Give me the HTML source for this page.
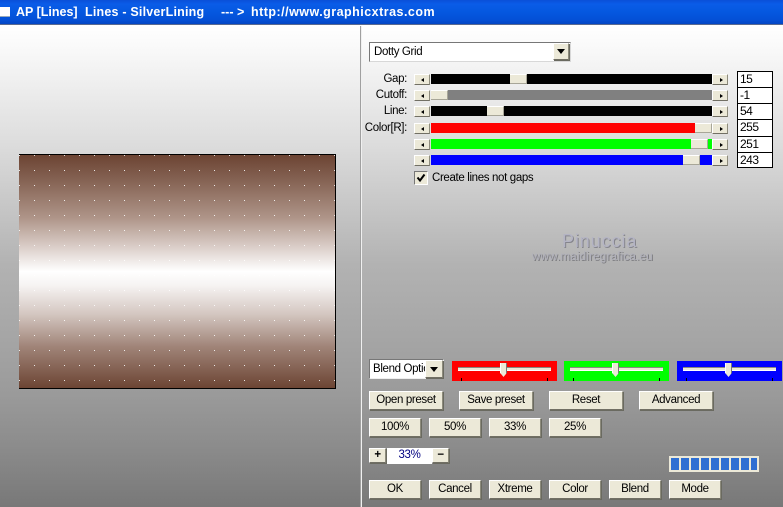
<!DOCTYPE html>
<html><head><meta charset="utf-8"><title>AP Lines</title>
<style>
html,body{margin:0;padding:0}
body{width:783px;height:507px;position:relative;overflow:hidden;font-family:"Liberation Sans",sans-serif;font-size:11.5px;letter-spacing:-.35px;color:#000;background:#888}
div,span{position:absolute;box-sizing:border-box}
#bg{left:0;top:25px;width:783px;height:482px;background:linear-gradient(180deg,#fff 0,#fafafa 20px,#dcdcdc 120px,#b2b2b2 240px,#a6a6a6 310px,#9a9a9a 370px,#8c8c8c 420px,#787878 482px)}
#tb{left:0;top:0;width:783px;height:25px;background:linear-gradient(180deg,#0a50d8 0,#0a5ce8 4px,#0558e0 12px,#0450d6 20px,#0346c4 24px);border-bottom:1px solid #5a6a90}
.t{top:4px;color:#fff;font-weight:bold;font-size:12.5px;line-height:16px;white-space:pre}
.b{background:#ece9d8;border-top:1px solid #fff;border-left:1px solid #fff;border-right:1px solid #8d8b7c;border-bottom:1px solid #716f64;box-shadow:1px 1px 0 #6a6a60;text-align:center;line-height:17px;white-space:nowrap}
.ar{background:#ece9d8;border-top:1px solid #fff;border-left:1px solid #fff;border-right:1px solid #8d8b7c;border-bottom:1px solid #716f64;height:11px;width:16px}
.ar:after{content:"";position:absolute;top:3px;left:6px;border:2px solid transparent;border-left:0;border-right:3px solid #000;width:0;height:0}
.ar.r:after{left:7px;border-right:0;border-left:3px solid #000}
.tr{left:431px;width:281px;height:10px}
.th{height:10px;width:17px;background:#ece9d8;border-top:1px solid #fff;border-right:1px solid #a8a698;border-bottom:1px solid #a8a698}
.lb{left:350px;width:57px;text-align:right;line-height:14px}
.in{left:737px;width:36px;height:16px;background:#fff;border:1px solid #000;border-bottom:0;padding-left:2px;line-height:15px;font-size:12px;letter-spacing:-.5px}
.box{top:361px;width:105px;height:20px}
.ln{left:6px;top:6px;width:93px;height:4px;background:#ece9d8;border-top:1px solid #8a8a80;border-bottom:1px solid #fff}
.kn{left:48px;top:2px;width:7px;height:14px;background:#ece9d8;border-left:1px solid #fff;border-right:1px solid #777;clip-path:polygon(0 0,100% 0,100% 70%,50% 100%,0 70%)}
.tk{top:17px;width:1px;height:3px;background:#000}
.cell{top:2px;width:8px;height:12px;background:#2f6fd2}
</style></head><body>
<div id="bg"></div>
<div id="tb">
<div style="left:0;top:7px;width:10px;height:10px;background:#fff;border-bottom:1px solid #9ab"></div>
<span class="t" style="left:16px;letter-spacing:0">AP [Lines]</span>
<span class="t" style="left:85px;letter-spacing:.2px">Lines - SilverLining</span>
<span class="t" style="left:221px;letter-spacing:0">--- &gt;</span>
<span class="t" style="left:251px;letter-spacing:.48px">http://www.graphicxtras.com</span>
</div>
<div style="left:360px;top:26px;width:1px;height:481px;background:#a0a0a0"></div>
<div style="left:361px;top:26px;width:1px;height:481px;background:#f0f0f0"></div>

<svg style="position:absolute;left:19px;top:154px" width="317" height="235">
<defs>
<linearGradient id="g" x1="0" y1="0" x2="0" y2="1">
<stop offset="0" stop-color="#6b4332"/><stop offset=".12" stop-color="#876556"/><stop offset=".27" stop-color="#ae9488"/><stop offset=".4" stop-color="#dcd0cb"/><stop offset=".5" stop-color="#ffffff"/><stop offset=".56" stop-color="#f6f3f2"/><stop offset=".68" stop-color="#d4c7c1"/><stop offset=".82" stop-color="#a08478"/><stop offset="1" stop-color="#6b4332"/>
</linearGradient>
<pattern id="d" x="0" y="1" width="15" height="15" patternUnits="userSpaceOnUse"><rect x="0" y="0" width="1" height="1" fill="#fff" opacity=".85"/></pattern>
</defs>
<rect width="317" height="235" fill="url(#g)"/>
<rect width="317" height="235" fill="url(#d)"/>
<rect x="0" y="234" width="317" height="1" fill="#000"/><rect x="316" y="0" width="1" height="235" fill="#000"/><rect x="0" y="0" width="317" height="1" fill="#000"/>
</svg>

<!-- combo -->
<div style="left:369px;top:42px;width:202px;height:20px;background:#fff;border:1px solid #777;border-right-color:#d8d8d8;border-bottom-color:#d8d8d8;padding-left:4px;line-height:18px">Dotty Grid</div>
<div class="b" style="left:553px;top:43px;width:16px;height:17px"><span style="left:3px;top:5px;width:0;height:0;border:4px solid transparent;border-top:5px solid #000;border-bottom:0"></span></div>

<div class="lb" style="top:72px">Gap:</div>
<div class="lb" style="top:88px">Cutoff:</div>
<div class="lb" style="top:104px">Line:</div>
<div class="lb" style="top:121px">Color[R]:</div>

<div class="ar" style="left:414px;top:74px"></div><div class="tr" style="top:74px;background:#000"></div><div class="th" style="left:510px;top:74px"></div><div class="ar r" style="left:712px;top:74px"></div>
<div class="ar" style="left:414px;top:90px"></div><div class="tr" style="top:90px;background:#808080"></div><div class="th" style="left:431px;top:90px"></div><div class="ar r" style="left:712px;top:90px"></div>
<div class="ar" style="left:414px;top:106px"></div><div class="tr" style="top:106px;background:#000"></div><div class="th" style="left:487px;top:106px"></div><div class="ar r" style="left:712px;top:106px"></div>
<div class="ar" style="left:414px;top:123px"></div><div class="tr" style="top:123px;background:#f00"></div><div class="th" style="left:695px;top:123px"></div><div class="ar r" style="left:712px;top:123px"></div>
<div class="ar" style="left:414px;top:139px"></div><div class="tr" style="top:139px;background:#0f0"></div><div class="th" style="left:691px;top:139px"></div><div class="ar r" style="left:712px;top:139px"></div>
<div class="ar" style="left:414px;top:155px"></div><div class="tr" style="top:155px;background:#00f"></div><div class="th" style="left:683px;top:155px"></div><div class="ar r" style="left:712px;top:155px"></div>

<div class="in" style="top:71px">15</div>
<div class="in" style="top:87px">-1</div>
<div class="in" style="top:103px">54</div>
<div class="in" style="top:119px;height:17px">255</div>
<div class="in" style="top:136px">251</div>
<div class="in" style="top:152px;height:16px;border-bottom:1px solid #000">243</div>

<div style="left:414px;top:171px;width:14px;height:14px;background:#ece9d8;border:1px solid;border-color:#777 #fff #fff #777"><svg style="position:absolute;left:1px;top:1px" width="10" height="10"><path d="M1.5 4.5L4 7.5L8.5 1.5" fill="none" stroke="#000" stroke-width="2"/></svg></div>
<div style="left:432px;top:171px;line-height:14px;white-space:nowrap">Create lines not gaps</div>

<div style="left:562px;top:231px;font-size:18px;line-height:20px;color:#b4b4c4;font-weight:normal;letter-spacing:.9px;text-shadow:1px 1px 0 #85858c;white-space:nowrap">Pinuccia</div>
<div style="left:532px;top:251px;font-size:11.5px;line-height:13px;color:#b0b0ba;letter-spacing:.25px;text-shadow:1px 1px 0 #7c7c80;white-space:nowrap">www.maidiregrafica.eu</div>

<!-- blend combo -->
<div style="left:369px;top:359px;width:75px;height:20px;background:#fff;border:1px solid #777;border-right-color:#eee;border-bottom-color:#eee;padding-left:3px;line-height:18px;overflow:hidden;white-space:nowrap">Blend Option</div>
<div class="b" style="left:425px;top:360px;width:18px;height:18px;z-index:2"><span style="left:4px;top:6px;width:0;height:0;border:4px solid transparent;border-top:5px solid #000;border-bottom:0"></span></div>

<div class="box" style="left:452px;background:#f00"><div class="ln"></div><div class="kn"></div><div class="tk" style="left:9px"></div><div class="tk" style="left:95px"></div></div>
<div class="box" style="left:564px;background:#0f0"><div class="ln"></div><div class="kn"></div><div class="tk" style="left:9px"></div><div class="tk" style="left:95px"></div></div>
<div class="box" style="left:677px;background:#00f"><div class="ln"></div><div class="kn"></div><div class="tk" style="left:9px"></div><div class="tk" style="left:95px"></div></div>

<div class="b" style="left:369px;top:391px;width:74px;height:19px">Open preset</div>
<div class="b" style="left:459px;top:391px;width:74px;height:19px">Save preset</div>
<div class="b" style="left:549px;top:391px;width:74px;height:19px">Reset</div>
<div class="b" style="left:639px;top:391px;width:74px;height:19px">Advanced</div>

<div class="b" style="left:369px;top:418px;width:52px;height:19px">100%</div>
<div class="b" style="left:429px;top:418px;width:52px;height:19px">50%</div>
<div class="b" style="left:489px;top:418px;width:52px;height:19px">33%</div>
<div class="b" style="left:549px;top:418px;width:52px;height:19px">25%</div>

<div class="b" style="left:369px;top:448px;width:17px;height:15px;line-height:13px;font-weight:bold">+</div>
<div style="left:387px;top:448px;width:45px;height:16px;background:#fff;color:#000080;text-align:center;line-height:14px">33%</div>
<div class="b" style="left:432px;top:448px;width:17px;height:15px;line-height:12px;font-weight:bold">−</div>

<div style="left:669px;top:456px;width:90px;height:16px;background:#ece9d8">
<div class="cell" style="left:2px"></div><div class="cell" style="left:12px"></div><div class="cell" style="left:22px"></div><div class="cell" style="left:32px"></div><div class="cell" style="left:42px"></div><div class="cell" style="left:52px"></div><div class="cell" style="left:62px"></div><div class="cell" style="left:72px"></div><div class="cell" style="left:82px;width:6px"></div>
</div>

<div class="b" style="left:369px;top:480px;width:52px;height:19px">OK</div>
<div class="b" style="left:429px;top:480px;width:52px;height:19px">Cancel</div>
<div class="b" style="left:489px;top:480px;width:52px;height:19px">Xtreme</div>
<div class="b" style="left:549px;top:480px;width:52px;height:19px">Color</div>
<div class="b" style="left:609px;top:480px;width:52px;height:19px">Blend</div>
<div class="b" style="left:669px;top:480px;width:52px;height:19px">Mode</div>
</body></html>
